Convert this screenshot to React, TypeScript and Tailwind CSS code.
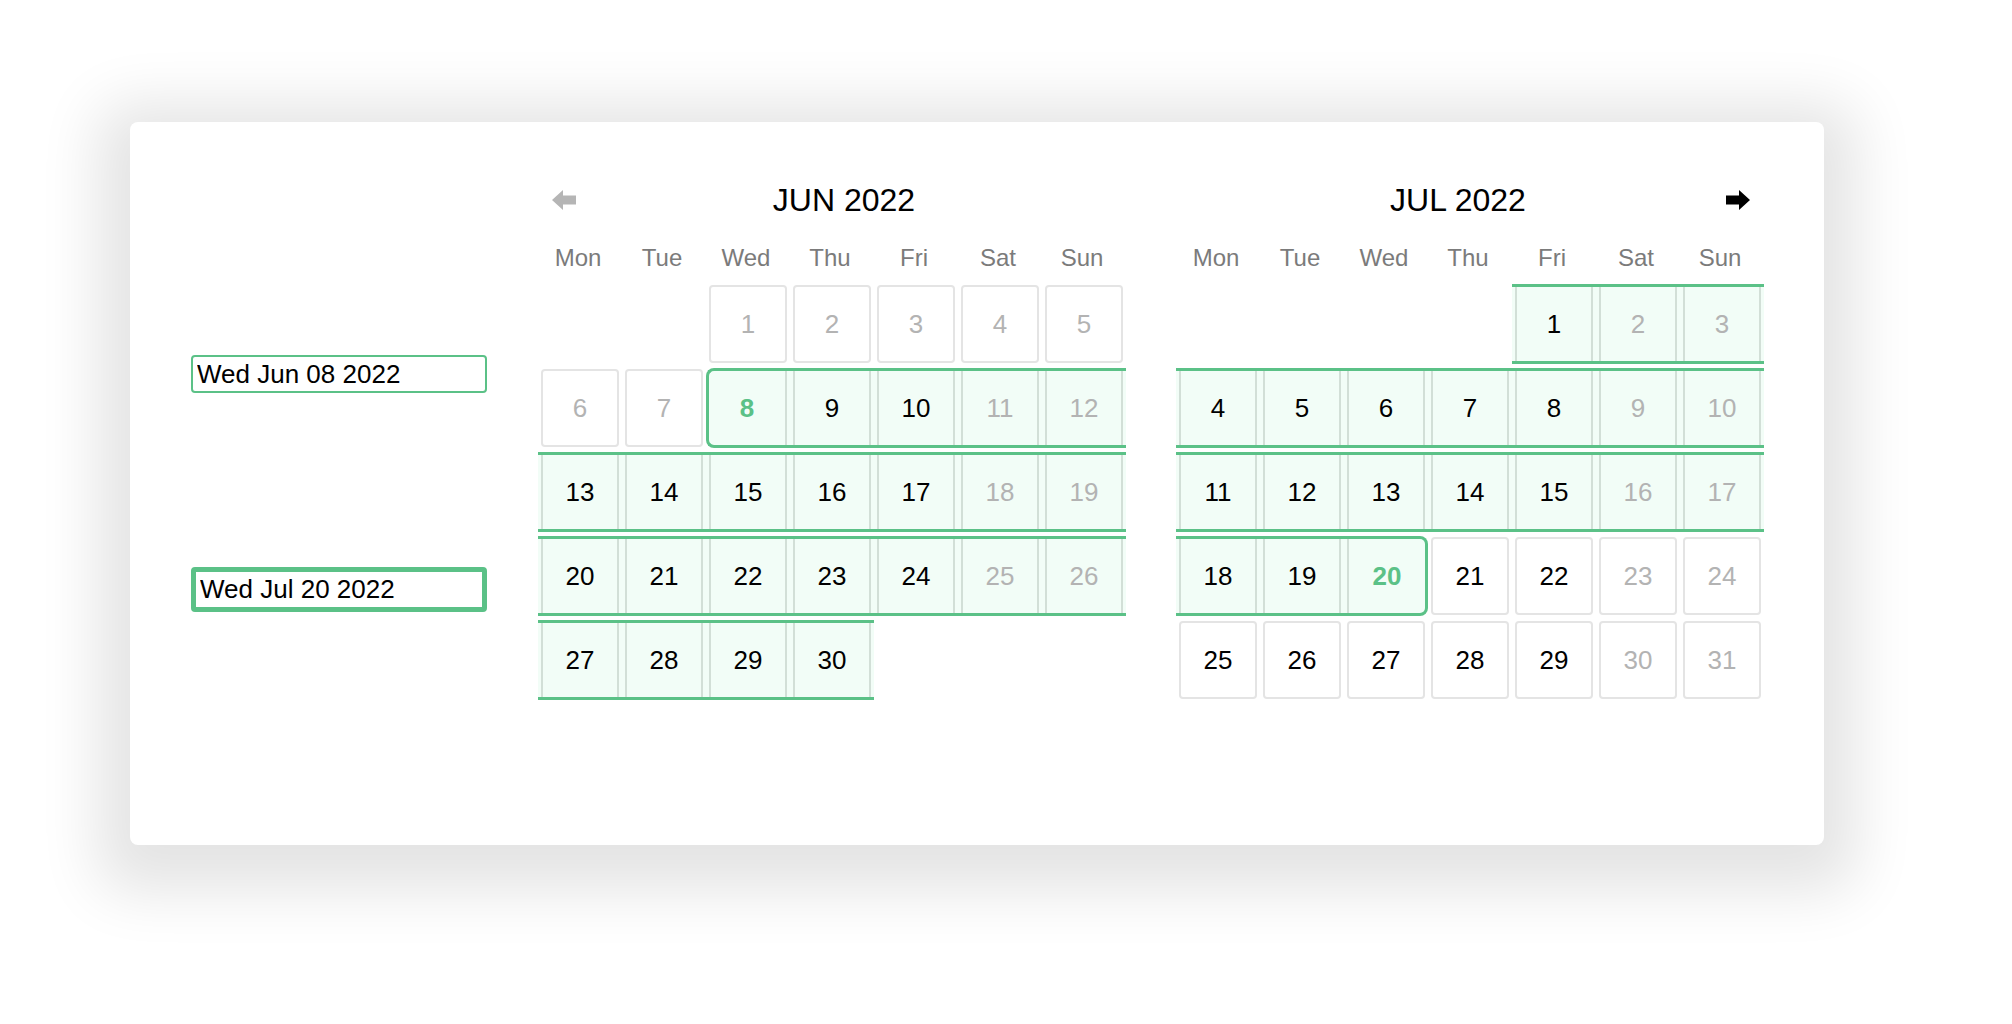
import React from 'react';

type Month = {
  label: string;
  key: 'jun' | 'jul';
  firstDow: number; // Monday = 0
  days: number;
  nav: 'prev' | 'next';
};

const months: Month[] = [
  { label: 'JUN 2022', key: 'jun', firstDow: 2, days: 30, nav: 'prev' },
  { label: 'JUL 2022', key: 'jul', firstDow: 4, days: 31, nav: 'next' },
];

const weekdays = ['Mon', 'Tue', 'Wed', 'Thu', 'Fri', 'Sat', 'Sun'];

function buildWeeks(firstDow: number, days: number): (number | null)[][] {
  const cells: (number | null)[] = [];
  for (let i = 0; i < firstDow; i++) cells.push(null);
  for (let d = 1; d <= days; d++) cells.push(d);
  while (cells.length % 7 !== 0) cells.push(null);
  const weeks: (number | null)[][] = [];
  for (let i = 0; i < cells.length; i += 7) weeks.push(cells.slice(i, i + 7));
  return weeks;
}

const inRange = (m: Month['key'], d: number) => (m === 'jun' ? d >= 8 : d <= 20);
const isStart = (m: Month['key'], d: number) => m === 'jun' && d === 8;
const isEnd = (m: Month['key'], d: number) => m === 'jul' && d === 20;
const isDisabled = (m: Month['key'], d: number) => m === 'jun' && d < 8;

const Arrow = ({ dir, color }: { dir: 'left' | 'right'; color: string }) => (
  <svg width="24" height="20" viewBox="0 0 24 20" className={dir === 'left' ? '-scale-x-100' : ''}>
    <path d="M0 5.5 H13 V0 L24 10 L13 20 V14.5 H0 Z" fill={color} />
  </svg>
);

const DayCell = ({ m, d, dow }: { m: Month['key']; d: number | null; dow: number }) => {
  if (d === null) return <div className="w-[84px] h-[80px]" />;

  const weekend = dow >= 5;
  const selected = isStart(m, d) || isEnd(m, d);
  const textColor = selected
    ? 'text-[#5bc187] font-bold'
    : weekend || isDisabled(m, d)
      ? 'text-[#b3b3b3]'
      : 'text-black';

  if (inRange(m, d)) {
    const start = isStart(m, d);
    const end = isEnd(m, d);
    return (
      <div
        className={`w-[84px] h-[80px] flex bg-[#f2fdf7] border-y-[3px] border-[#5bc187] ${
          start ? 'border-l-[3px] rounded-l-[8px]' : ''
        } ${end ? 'border-r-[3px] rounded-r-[8px]' : ''}`}
      >
        <div
          className={`flex-1 flex items-center justify-center border-[#d2dfd7] ${
            start ? 'ml-0' : 'ml-[3px] border-l-2'
          } ${end ? 'mr-0' : 'mr-[3px] border-r-2'}`}
        >
          <span className={`text-[26px] leading-none ${textColor}`}>{d}</span>
        </div>
      </div>
    );
  }

  return (
    <div className="w-[84px] h-[80px] px-[3px] py-[1px]">
      <div className="h-full border-2 border-[#e4e4e4] rounded-[4px] bg-white flex items-center justify-center">
        <span className={`text-[26px] leading-none ${textColor}`}>{d}</span>
      </div>
    </div>
  );
};

const MonthView = ({ month }: { month: Month }) => {
  const weeks = buildWeeks(month.firstDow, month.days);
  return (
    <div className="w-[588px] flex flex-col">
      {/* header */}
      <div className="h-[40px] px-[14px] flex items-center">
        {month.nav === 'prev' && <Arrow dir="left" color="#b5b5b5" />}
        <div className="flex-1 text-center text-[32px] leading-none text-black">{month.label}</div>
        {month.nav === 'next' && <Arrow dir="right" color="#000000" />}
      </div>

      <div className="mt-[22px] h-[32px] flex">
        {weekdays.map((w) => (
          <div key={w} className="w-[84px] pr-[4px] flex items-center justify-center text-[24px] text-[#7b7b7b]">
            {w}
          </div>
        ))}
      </div>

      <div className="mt-[10px] flex flex-col gap-[4px]">
        {weeks.map((week, wi) => (
          <div key={wi} className="flex">
            {week.map((d, di) => (
              <DayCell key={di} m={month.key} d={d} dow={di} />
            ))}
          </div>
        ))}
      </div>
    </div>
  );
};

export default function App() {
  return (
    <div className="min-h-[1024px] w-full bg-white pt-[122px] pl-[130px]" style={{ fontFamily: '"Liberation Sans", Arial, sans-serif' }}>
      <div className="w-[1694px] h-[723px] bg-white rounded-[8px] shadow-[0_14px_60px_32px_rgba(0,0,0,0.11)] flex pl-[61px]">
        {/* inputs */}
        <div className="w-[296px] flex flex-col">
          <input
            readOnly
            value="Wed Jun 08 2022"
            className="mt-[233px] h-[38px] w-full border-2 border-[#5bc187] rounded-[4px] pl-[4px] text-[26px] leading-none text-black outline-none"
          />
          <input
            readOnly
            value="Wed Jul 20 2022"
            className="mt-[174px] h-[45px] w-full border-[5px] border-[#5bc187] rounded-[4px] pl-[4px] text-[26px] leading-none text-black outline-none"
          />
        </div>

        {/* calendars */}
        <div className="ml-[51px] pt-[58px] flex gap-[50px]">
          {months.map((m) => (
            <MonthView key={m.key} month={m} />
          ))}
        </div>
      </div>
    </div>
  );
}
